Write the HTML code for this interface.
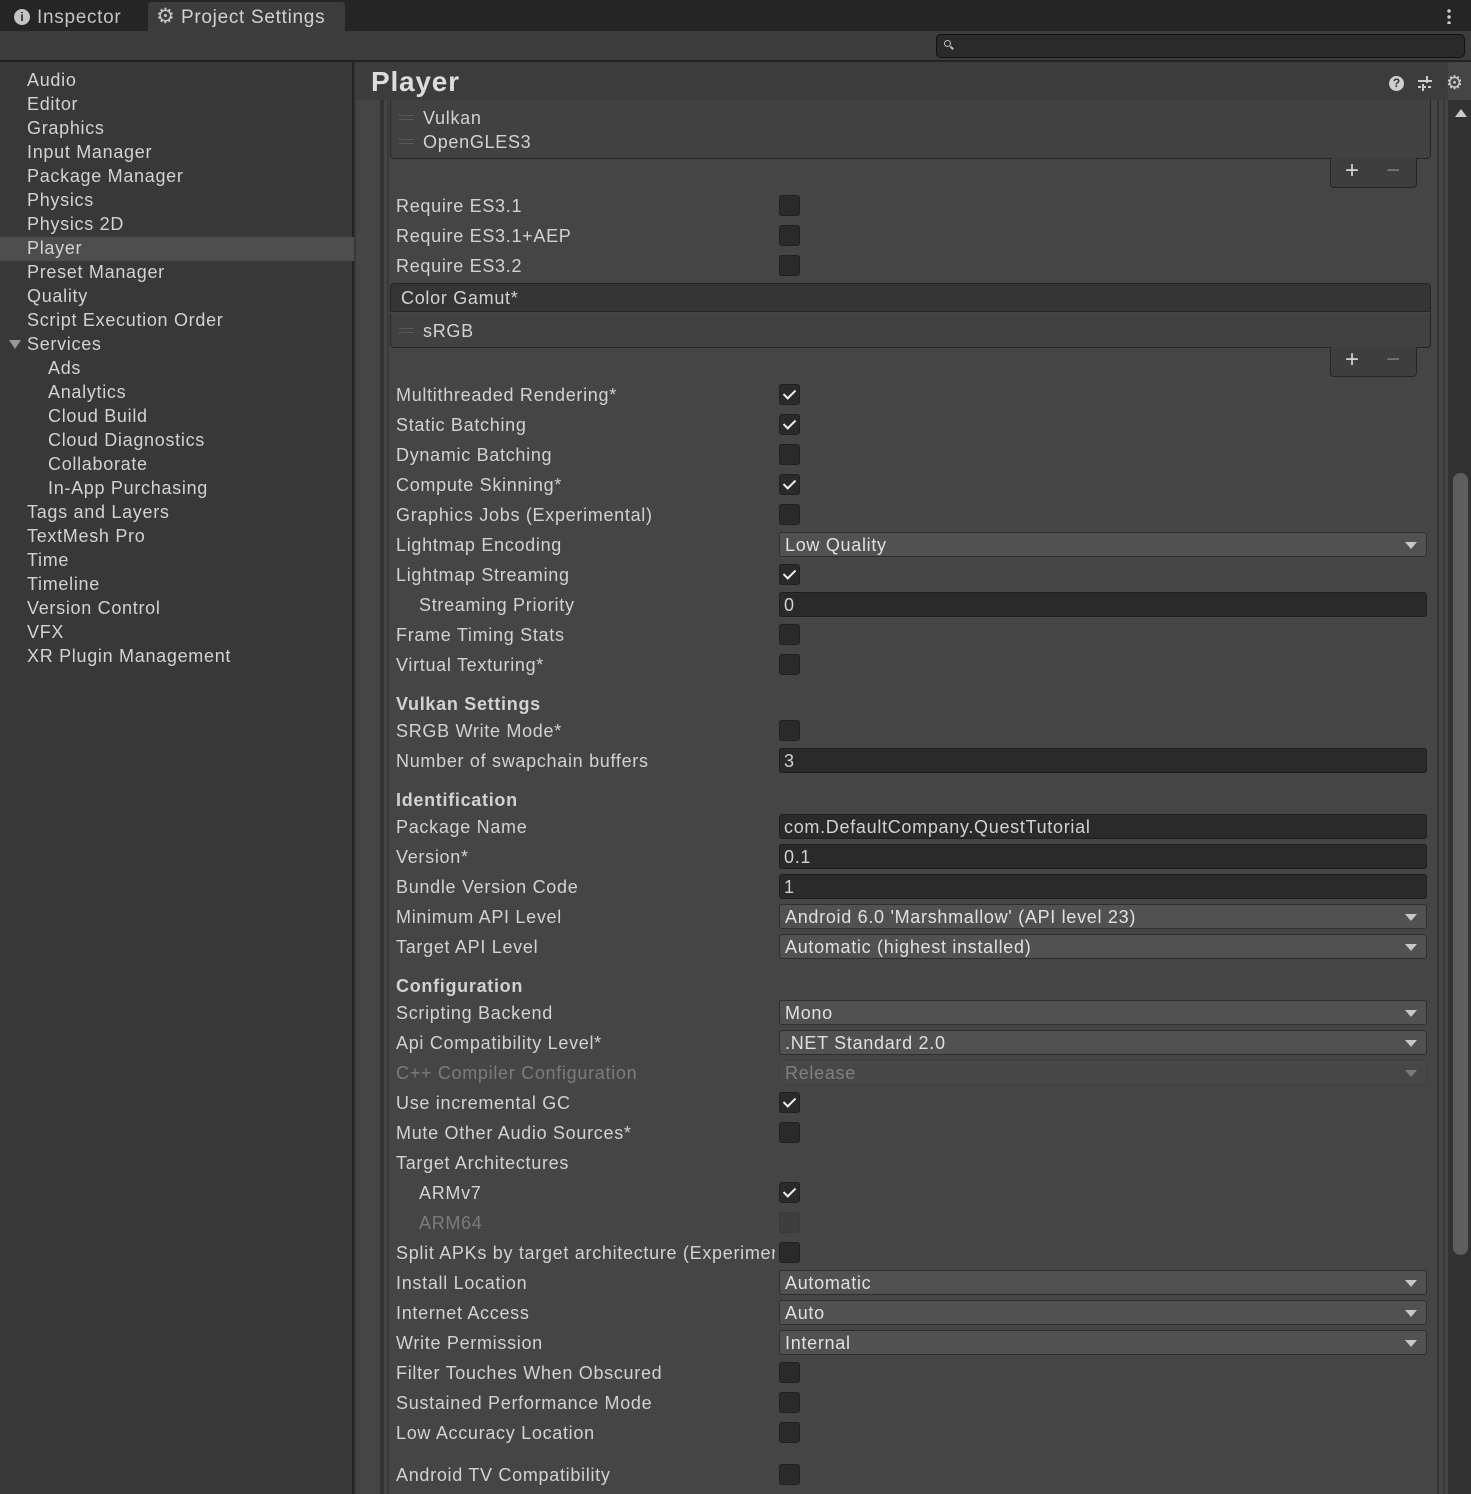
<!DOCTYPE html>
<html><head><meta charset="utf-8"><style>
*{box-sizing:border-box;margin:0;padding:0}
body{width:1471px;height:1494px;background:#383838;font-family:"Liberation Sans","DejaVu Sans",sans-serif;color:#d2d2d2;font-size:18px;position:relative;overflow:hidden;letter-spacing:0.7px}
.a{position:absolute}
.tabbar{left:0;top:0;width:1471px;height:31px;background:#252525}
.tool{left:0;top:31px;width:1471px;height:31px;background:#3c3c3c;border-bottom:2px solid #232323}
.side{left:0;top:62px;width:354px;height:1432px;background:#383838;border-right:2px solid #232323}
.si{position:absolute;left:27px;font-size:18px;line-height:24px;height:24px;color:#d2d2d2;white-space:nowrap;margin-top:1px}
.main{left:356px;top:62px;width:1115px;height:1432px;background:#454545}
.hdr{left:356px;top:62px;width:1092px;height:38px;background:#3c3c3c}
.lab{position:absolute;left:396px;height:24px;line-height:24px;white-space:nowrap;font-size:18px;color:#d2d2d2;margin-top:1px}
.b{font-weight:bold}
.cb{position:absolute;left:779px;width:21px;height:21px;background:#2a2a2a;border:1px solid #202020;border-radius:3px}
.cb.on::after{content:"";position:absolute;left:6px;top:2px;width:5px;height:10px;border:solid #eee;border-width:0 2px 2px 0;transform:rotate(45deg)}
.cb.dis{background:#3e3e3e;border-color:#3a3a3a}
.fld{position:absolute;left:779px;width:648px;height:25px;background:#2a2a2a;border:1px solid #1e1e1e;border-radius:3px;padding-left:4px;line-height:24px;color:#d2d2d2}
.dd{position:absolute;left:779px;width:648px;height:25px;background:#515151;border:1px solid #2e2e2e;border-radius:3px;padding-left:5px;line-height:24px;color:#e0e0e0}
.dd::after{content:"";position:absolute;right:9px;top:9px;border-left:6px solid transparent;border-right:6px solid transparent;border-top:7px solid #c8c8c8}
.dd.dis{background:#474747;border-color:#3f3f3f;color:#808080}
.dd.dis::after{border-top-color:#7a7a7a}
.grip{position:absolute;left:399px;width:15px;height:5px;border-top:1px solid #5a5a5a;border-bottom:1px solid #5a5a5a}
.foot{position:absolute;left:1330px;width:87px;height:30px;background:#3e3e3e;border:1px solid #252525;border-top:none;border-radius:0 0 4px 4px}
.foot span{position:absolute;top:0;font-size:24px;line-height:26px}
</style></head><body>
<div class="a tabbar"></div>
<div class="a" style="left:148px;top:2px;width:197px;height:29px;background:#3c3c3c;border-radius:3px 3px 0 0"></div>
<div class="a" style="left:14px;top:9px;width:16px;height:16px;border-radius:50%;background:#c4c4c4;color:#252525;font-size:12px;font-weight:bold;text-align:center;line-height:16px;letter-spacing:0">i</div>
<div class="a" style="left:37px;top:7px;font-size:19px;color:#c4c4c4">Inspector</div>
<div class="a" style="left:156px;top:4px;font-size:21px;color:#c4c4c4">⚙</div>
<div class="a" style="left:181px;top:7px;font-size:19px;color:#d2d2d2">Project Settings</div>
<div class="a" style="left:1447px;top:8px;width:4px;height:16px;background:radial-gradient(circle,#ccc 1.5px,transparent 2px) 0 0/4px 6px"></div>
<div class="a tool"></div>
<div class="a" style="left:936px;top:34px;width:529px;height:24px;background:#2a2a2a;border:1px solid #111;border-radius:5px"></div>
<div class="a" style="left:944px;top:40px;width:7px;height:7px;border:1.5px solid #bbb;border-radius:50%"></div>
<div class="a" style="left:950px;top:47px;width:4px;height:1.5px;background:#bbb;transform:rotate(45deg)"></div>
<div class="a side"></div>
<div class="a" style="left:0;top:237px;width:354px;height:24px;background:#4d4d4d"></div>
<div class="si" style="top:67px">Audio</div>
<div class="si" style="top:91px">Editor</div>
<div class="si" style="top:115px">Graphics</div>
<div class="si" style="top:139px">Input Manager</div>
<div class="si" style="top:163px">Package Manager</div>
<div class="si" style="top:187px">Physics</div>
<div class="si" style="top:211px">Physics 2D</div>
<div class="si" style="top:235px">Player</div>
<div class="si" style="top:259px">Preset Manager</div>
<div class="si" style="top:283px">Quality</div>
<div class="si" style="top:307px">Script Execution Order</div>
<div class="a" style="left:9px;top:340px;border-left:6px solid transparent;border-right:6px solid transparent;border-top:9px solid #999"></div>
<div class="si" style="top:331px">Services</div>
<div class="si" style="top:355px;left:48px">Ads</div>
<div class="si" style="top:379px;left:48px">Analytics</div>
<div class="si" style="top:403px;left:48px">Cloud Build</div>
<div class="si" style="top:427px;left:48px">Cloud Diagnostics</div>
<div class="si" style="top:451px;left:48px">Collaborate</div>
<div class="si" style="top:475px;left:48px">In-App Purchasing</div>
<div class="si" style="top:499px">Tags and Layers</div>
<div class="si" style="top:523px">TextMesh Pro</div>
<div class="si" style="top:547px">Time</div>
<div class="si" style="top:571px">Timeline</div>
<div class="si" style="top:595px">Version Control</div>
<div class="si" style="top:619px">VFX</div>
<div class="si" style="top:643px">XR Plugin Management</div>

<div class="a main"></div>
<div class="a" style="left:1448px;top:100px;width:23px;height:1394px;background:#323232"></div>
<div class="a" style="left:1453px;top:473px;width:15px;height:782px;background:#5e5e5e;border-radius:8px"></div>
<div class="a" style="left:1455px;top:109px;border-left:6px solid transparent;border-right:6px solid transparent;border-bottom:8px solid #ccc"></div>
<div class="a" style="left:1437px;top:100px;width:2px;height:1394px;background:#333"></div>
<div class="a" style="left:1443px;top:100px;width:2px;height:1394px;background:#3a3a3a"></div>
<div class="a" style="left:380px;top:100px;width:4px;height:1394px;background:#333"></div>
<div class="a" style="left:387px;top:100px;width:2px;height:1394px;background:#3a3a3a"></div>
<div class="a hdr"></div>
<div class="a b" style="left:371px;top:66px;font-size:28px;color:#dcdcdc;letter-spacing:0.8px">Player</div>
<div class="a" style="left:1389px;top:76px;width:15px;height:15px;border-radius:50%;background:#cfcfcf;color:#333;font-size:12px;font-weight:bold;text-align:center;line-height:15px;letter-spacing:0">?</div>
<svg class="a" style="left:1417px;top:75px" width="16" height="17" viewBox="0 0 16 17"><g stroke="#ccc" stroke-width="2"><line x1="1" y1="6" x2="15" y2="6"/><line x1="1" y1="12" x2="15" y2="12" stroke-dasharray="3 2"/><line x1="10" y1="1" x2="10" y2="8"/><line x1="6" y1="9" x2="6" y2="16"/></g></svg>
<div class="a" style="left:1446px;top:72px;font-size:19px;color:#ccc">⚙</div>

<div class="a" style="left:390px;top:100px;width:1041px;height:59px;background:#414141;border:1px solid #252525;border-top:none;border-radius:0 0 4px 4px"></div>
<div class="grip" style="top:115px"></div><div class="lab" style="left:423px;top:105px">Vulkan</div>
<div class="grip" style="top:139px"></div><div class="lab" style="left:423px;top:129px">OpenGLES3</div>
<div class="foot" style="top:158px"><span style="left:14px">+</span><span style="left:55px;color:#777">−</span></div>

<div class="lab" style="top:193px">Require ES3.1</div><div class="cb" style="top:195px"></div>
<div class="lab" style="top:223px">Require ES3.1+AEP</div><div class="cb" style="top:225px"></div>
<div class="lab" style="top:253px">Require ES3.2</div><div class="cb" style="top:255px"></div>
<div class="a" style="left:390px;top:283px;width:1041px;height:29px;background:#353535;border:1px solid #262626;border-radius:4px 4px 0 0"></div>
<div class="lab" style="left:401px;top:285px">Color Gamut*</div>
<div class="a" style="left:390px;top:313px;width:1041px;height:35px;background:#414141;border:1px solid #252525;border-top:none;border-radius:0 0 4px 4px"></div>
<div class="grip" style="top:328px"></div><div class="lab" style="left:423px;top:318px">sRGB</div>
<div class="foot" style="top:347px"><span style="left:14px">+</span><span style="left:55px;color:#777">−</span></div>

<div class="lab" style="top:382px">Multithreaded Rendering*</div><div class="cb on" style="top:384px"></div>
<div class="lab" style="top:412px">Static Batching</div><div class="cb on" style="top:414px"></div>
<div class="lab" style="top:442px">Dynamic Batching</div><div class="cb" style="top:444px"></div>
<div class="lab" style="top:472px">Compute Skinning*</div><div class="cb on" style="top:474px"></div>
<div class="lab" style="top:502px">Graphics Jobs (Experimental)</div><div class="cb" style="top:504px"></div>
<div class="lab" style="top:532px">Lightmap Encoding</div><div class="dd" style="top:532px">Low Quality</div>
<div class="lab" style="top:562px">Lightmap Streaming</div><div class="cb on" style="top:564px"></div>
<div class="lab" style="top:592px;left:419px">Streaming Priority</div><div class="fld" style="top:592px">0</div>
<div class="lab" style="top:622px">Frame Timing Stats</div><div class="cb" style="top:624px"></div>
<div class="lab" style="top:652px">Virtual Texturing*</div><div class="cb" style="top:654px"></div>
<div class="lab b" style="top:691px">Vulkan Settings</div>
<div class="lab" style="top:718px">SRGB Write Mode*</div><div class="cb" style="top:720px"></div>
<div class="lab" style="top:748px">Number of swapchain buffers</div><div class="fld" style="top:748px">3</div>
<div class="lab b" style="top:787px">Identification</div>
<div class="lab" style="top:814px">Package Name</div><div class="fld" style="top:814px">com.DefaultCompany.QuestTutorial</div>
<div class="lab" style="top:844px">Version*</div><div class="fld" style="top:844px">0.1</div>
<div class="lab" style="top:874px">Bundle Version Code</div><div class="fld" style="top:874px">1</div>
<div class="lab" style="top:904px">Minimum API Level</div><div class="dd" style="top:904px">Android 6.0 'Marshmallow' (API level 23)</div>
<div class="lab" style="top:934px">Target API Level</div><div class="dd" style="top:934px">Automatic (highest installed)</div>
<div class="lab b" style="top:973px">Configuration</div>
<div class="lab" style="top:1000px">Scripting Backend</div><div class="dd" style="top:1000px">Mono</div>
<div class="lab" style="top:1030px">Api Compatibility Level*</div><div class="dd" style="top:1030px">.NET Standard 2.0</div>
<div class="lab" style="top:1060px;color:#7c7c7c">C++ Compiler Configuration</div><div class="dd dis" style="top:1060px">Release</div>
<div class="lab" style="top:1090px">Use incremental GC</div><div class="cb on" style="top:1092px"></div>
<div class="lab" style="top:1120px">Mute Other Audio Sources*</div><div class="cb" style="top:1122px"></div>
<div class="lab" style="top:1150px">Target Architectures</div>
<div class="lab" style="top:1180px;left:419px">ARMv7</div><div class="cb on" style="top:1182px"></div>
<div class="lab" style="top:1210px;left:419px;color:#7c7c7c">ARM64</div><div class="cb dis" style="top:1212px"></div>
<div class="lab" style="top:1240px;width:379px;overflow:hidden">Split APKs by target architecture (Experimental)</div><div class="cb" style="top:1242px"></div>
<div class="lab" style="top:1270px">Install Location</div><div class="dd" style="top:1270px">Automatic</div>
<div class="lab" style="top:1300px">Internet Access</div><div class="dd" style="top:1300px">Auto</div>
<div class="lab" style="top:1330px">Write Permission</div><div class="dd" style="top:1330px">Internal</div>
<div class="lab" style="top:1360px">Filter Touches When Obscured</div><div class="cb" style="top:1362px"></div>
<div class="lab" style="top:1390px">Sustained Performance Mode</div><div class="cb" style="top:1392px"></div>
<div class="lab" style="top:1420px">Low Accuracy Location</div><div class="cb" style="top:1422px"></div>
<div class="lab" style="top:1462px">Android TV Compatibility</div><div class="cb" style="top:1464px"></div>
</body></html>
